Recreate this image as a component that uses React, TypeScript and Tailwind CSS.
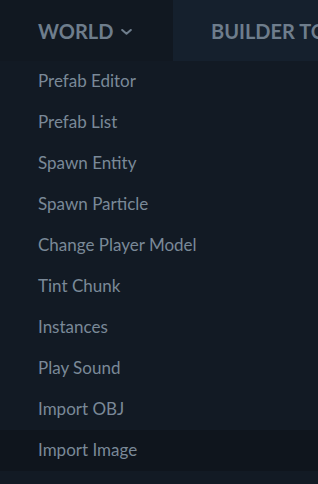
const items = [
  "Prefab Editor",
  "Prefab List",
  "Spawn Entity",
  "Spawn Particle",
  "Change Player Model",
  "Tint Chunk",
  "Instances",
  "Play Sound",
  "Import OBJ",
  "Import Image",
];

export default function App() {
  return (
    <div
      className="h-[484px] w-[318px] overflow-hidden bg-[#121a24]"
      style={{ fontFamily: "Lato, 'Noto Sans', sans-serif" }}>
      <div className="flex h-[61px] bg-[#111821]">
        <button className="flex w-[173px] shrink-0 items-center gap-[7px] pl-[38px] text-[20px] font-bold uppercase text-[#6e7d8c]">
          World
          <svg viewBox="0 0 13 7" className="mt-0.5 h-[6px] w-[13px]" fill="none">
            <path
              d="M1.5 1.2 L6.5 5.5 L11.5 1.2"
              stroke="#6e7d8c"
              strokeWidth="2.4"
              strokeLinecap="round"
              strokeLinejoin="round"
            />
          </svg>
        </button>
        <div className="flex flex-1 items-center overflow-hidden whitespace-nowrap bg-[#15202d] pl-[38px] text-[20px] font-bold uppercase text-[#6e7d8c]">
          Builder Tools
        </div>
      </div>
      <ul>
        {items.map((item, i) => (
          <li
            key={item}
            className={`flex h-[41px] items-center pb-px pl-[38px] text-[17px] text-[#7a8998] ${
              i === items.length - 1 ? "bg-[#0f151d]" : ""
            }`}>
            {item}
          </li>
        ))}
      </ul>
    </div>
  );
}
